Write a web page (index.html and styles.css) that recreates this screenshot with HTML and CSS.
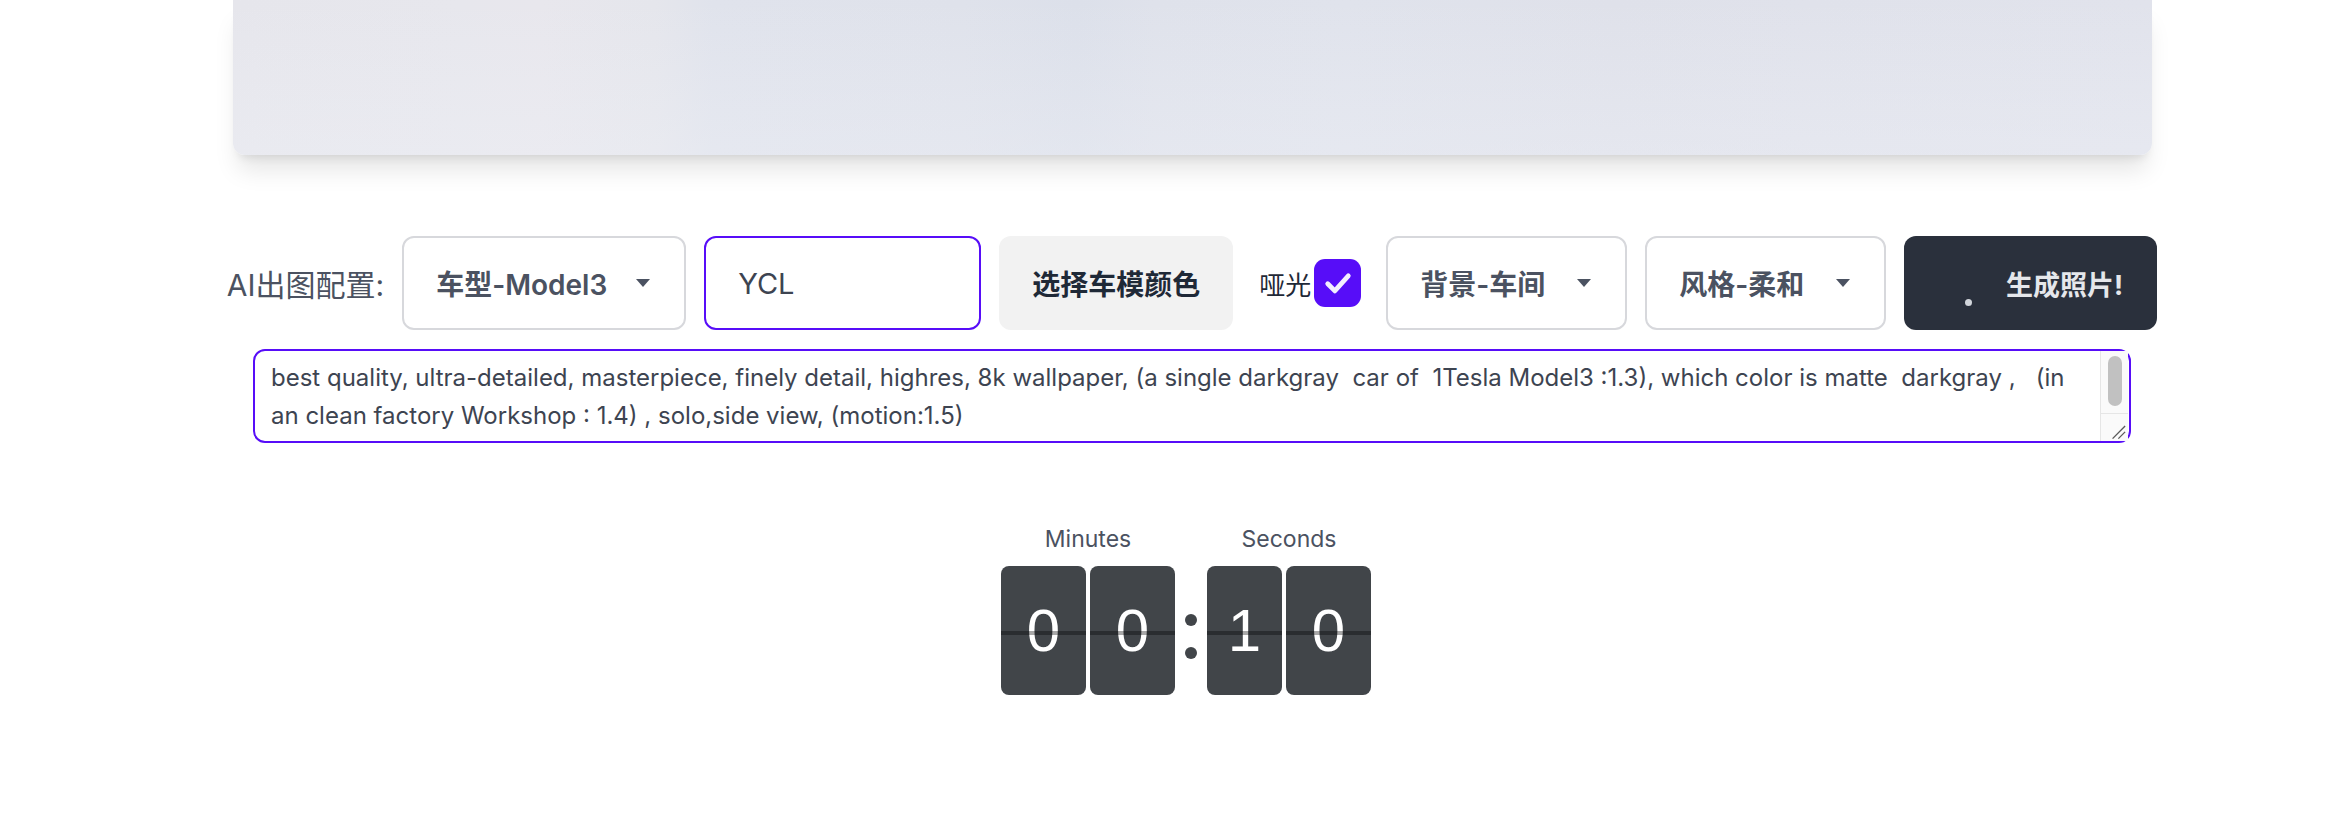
FILE: index.html
```html
<!DOCTYPE html>
<html lang="zh">
<head>
<meta charset="utf-8">
<title>AI出图</title>
<link rel="stylesheet" href="styles.css">
</head>
<body>
<div class="page">
  <div class="hero"></div>

  <div class="config">
    <span class="config-label">AI出图配置:</span>
    <div class="select w-model">
      <span>车型-Model3</span>
      <svg class="caret" viewBox="0 0 14 8" width="14" height="8"><path d="M0 0h14L7 8z"/></svg>
    </div>
    <input class="text-input" type="text" value="YCL">
    <button class="btn-color" type="button">选择车模颜色</button>
    <label class="matte">
      <span>哑光</span>
      <span class="checkbox">
        <svg viewBox="0 0 24 24" width="38" height="38"><path d="M5.5 12.5l4.5 4.5L18.5 7.5" fill="none" stroke="#f3efff" stroke-width="3" stroke-linecap="round" stroke-linejoin="round"/></svg>
      </span>
    </label>
    <div class="select w-opt">
      <span>背景-车间</span>
      <svg class="caret" viewBox="0 0 14 8" width="14" height="8"><path d="M0 0h14L7 8z"/></svg>
    </div>
    <div class="select w-opt">
      <span>风格-柔和</span>
      <svg class="caret" viewBox="0 0 14 8" width="14" height="8"><path d="M0 0h14L7 8z"/></svg>
    </div>
    <button class="btn-generate" type="button"><span class="loader"></span><span>生成照片!</span></button>
  </div>

  <div class="prompt-box">
    <textarea class="prompt" spellcheck="false">best quality, ultra-detailed, masterpiece, finely detail, highres, 8k wallpaper, (a single darkgray  car of  1Tesla Model3 :1.3), which color is matte  darkgray ,   (in an clean factory Workshop : 1.4) , solo,side view, (motion:1.5)</textarea>
    <div class="scrollbar" aria-hidden="true">
      <div class="scroll-track"><div class="scroll-thumb"></div></div>
      <div class="resizer">
        <svg viewBox="0 0 28 28" width="28" height="28"><path d="M12 25L25 12M18 25L25 18" stroke="#5a5a5a" stroke-width="1.4" fill="none"/></svg>
      </div>
    </div>
  </div>

  <div class="countdown">
    <div class="unit">
      <div class="unit-label">Minutes</div>
      <div class="cards">
        <div class="card">0</div>
        <div class="card">0</div>
      </div>
    </div>
    <div class="colon"><span></span><span></span></div>
    <div class="unit">
      <div class="unit-label">Seconds</div>
      <div class="cards">
        <div class="card narrow">1</div>
        <div class="card">0</div>
      </div>
    </div>
  </div>
</div>
</body>
</html>
```

FILE: styles.css
```css
* { box-sizing: border-box; }

html, body {
  margin: 0;
  background: #ffffff;
}

body {
  font-family: "Inter", "Noto Sans CJK SC", sans-serif;
  color: #3d4451;
}

.page {
  display: flex;
  flex-direction: column;
  align-items: center;
  padding-left: 52px;
}

.hero {
  width: 1919px;
  height: 155px;
  border-radius: 0 0 12px 12px;
  background:
    linear-gradient(180deg, rgba(255,255,255,0) 0%, rgba(240,242,248,0.35) 100%),
    linear-gradient(90deg, #e6e6ec 0%, #e7e7ed 12%, #e8e7ed 16%, #e5e6ec 22%, #e0e3ec 25%, #dfe2eb 38%, #dce0ea 44%, #dfe2eb 48%, #e0e3ec 58%, #dfe1ea 72%, #e0e2eb 82%, #e1e3ec 100%);
  box-shadow: 0 20px 25px -5px rgba(0,0,0,0.10), 0 8px 10px -6px rgba(0,0,0,0.10);
}

.config {
  margin-top: 81px;
  height: 94px;
  display: flex;
  align-items: center;
  gap: 18px;
}

.config-label {
  font-size: 30px;
  color: #4b5261;
  white-space: nowrap;
}

.select {
  height: 94px;
  display: flex;
  align-items: center;
  justify-content: space-between;
  padding: 0 34px 0 32px;
  border: 2px solid #d7d8dc;
  border-radius: 12px;
  background: #fff;
  font-size: 28px;
  font-weight: 600;
  color: #4b5261;
  white-space: nowrap;
}

.w-model { width: 284px; }
.w-opt { width: 241px; }

.caret { fill: #4b5261; flex: none; }

.text-input {
  width: 277px;
  height: 94px;
  border: 2px solid #570df8;
  border-radius: 12px;
  padding: 0 32px;
  font-family: inherit;
  font-size: 29px;
  color: #3d4451;
  background: #fff;
  outline: none;
}

.btn-color {
  width: 234px;
  height: 94px;
  border: none;
  border-radius: 12px;
  background: #f2f2f2;
  font-family: inherit;
  font-size: 28px;
  font-weight: 700;
  color: #1f2937;
  padding: 0;
}

.matte {
  display: flex;
  align-items: center;
  gap: 3px;
  margin: 0 7px 0 8px;
  font-size: 26px;
  color: #1f2937;
}

.checkbox {
  width: 47px;
  height: 48px;
  border-radius: 11px;
  background: #570df8;
  display: flex;
  align-items: center;
  justify-content: center;
}

.btn-generate {
  width: 253px;
  height: 94px;
  border: none;
  border-radius: 12px;
  background: #2a303c;
  color: #e5e7eb;
  font-family: inherit;
  font-size: 27px;
  font-weight: 700;
  display: flex;
  align-items: center;
  justify-content: flex-end;
  gap: 34px;
  padding: 0 34px 0 0;
}

.loader {
  width: 7px;
  height: 7px;
  border-radius: 50%;
  background: #d1d5db;
  margin-top: 38px;
}

.prompt-box {
  position: relative;
  margin-top: 19px;
  width: 1878px;
  height: 94px;
}

.prompt {
  display: block;
  width: 100%;
  height: 100%;
  border: 2px solid #570df8;
  border-radius: 12px;
  padding: 8px 49px 22px 16px;
  font-family: inherit;
  font-size: 24px;
  line-height: 38px;
  color: #3d4451;
  background: #fff;
  outline: none;
  resize: none;
  overflow: hidden;
}

.scrollbar {
  position: absolute;
  top: 2px;
  right: 3px;
  bottom: 2px;
  width: 28px;
  display: flex;
  flex-direction: column;
  background: #fafafa;
  border-left: 1px solid #e6e6e6;
}

.scroll-track {
  flex: 1;
  padding: 5px 6px 0 7px;
}

.scroll-thumb {
  height: 50px;
  border-radius: 8px;
  background: #c1c1c1;
}

.resizer {
  height: 28px;
  border-top: 1px solid #e6e6e6;
  display: flex;
}

.countdown {
  margin-top: 82px;
  margin-right: 12px;
  display: flex;
  align-items: flex-end;
}

.unit {
  display: flex;
  flex-direction: column;
  align-items: center;
}

.unit-label {
  font-size: 23px;
  line-height: 28px;
  color: #4b5261;
  margin-bottom: 13px;
}

.cards {
  display: flex;
  gap: 4px;
}

.card {
  width: 85px;
  height: 129px;
  border-radius: 8px;
  background: #414549;
  color: #ffffff;
  font-family: "Liberation Sans", "Helvetica", sans-serif;
  font-size: 60px;
  display: flex;
  align-items: center;
  justify-content: center;
  position: relative;
}

.card.narrow { width: 75px; }

.card::after {
  content: "";
  position: absolute;
  left: 0;
  right: 0;
  top: 65px;
  height: 4px;
  background: rgba(0,0,0,0.34);
}

.colon {
  width: 32px;
  height: 129px;
  display: flex;
  flex-direction: column;
  align-items: center;
  justify-content: center;
  gap: 21px;
  padding-top: 12px;
}

.colon span {
  width: 12px;
  height: 12px;
  border-radius: 50%;
  background: #414549;
}
```
